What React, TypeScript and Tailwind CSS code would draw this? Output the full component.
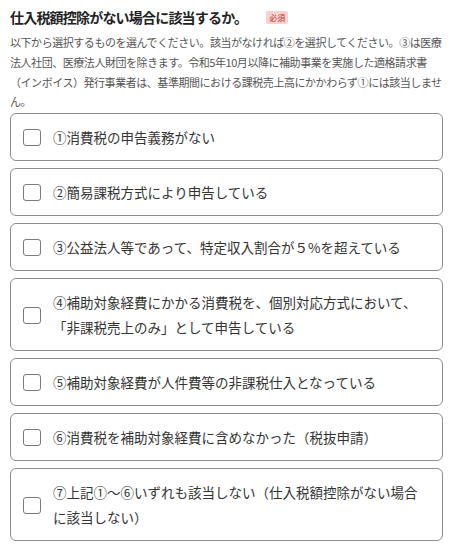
import { Fragment } from "react"

const options: string[][] = [
  ["①消費税の申告義務がない"],
  ["②簡易課税方式により申告している"],
  ["③公益法人等であって、特定収入割合が５%を超えている"],
  ["④補助対象経費にかかる消費税を、個別対応方式において、", "「非課税売上のみ」として申告している"],
  ["⑤補助対象経費が人件費等の非課税仕入となっている"],
  ["⑥消費税を補助対象経費に含めなかった（税抜申請）"],
  ["⑦上記①～⑥いずれも該当しない（仕入税額控除がない場合", "に該当しない）"],
]

const note = [
  "以下から選択するものを選んでください。該当がなければ②を選択してください。③は医療",
  "法人社団、医療法人財団を除きます。令和5年10月以降に補助事業を実施した適格請求書",
  "（インボイス）発行事業者は、基準期間における課税売上高にかかわらず①には該当しませ",
  "ん。",
]

export default function App() {
  return (
    <div
      className="w-[456px] min-h-[548px] bg-white px-[10px] pt-[7px]"
      style={{ fontFamily: '"Noto Sans CJK JP", "Noto Sans", sans-serif' }}
    >
      {/* Heading */}
      <div className="flex items-center">
        <h2 className="text-[14px] leading-[20px] font-bold tracking-[-0.8px] text-[#222]">
          仕入税額控除がない場合に該当するか。
        </h2>
        <span className="ml-[19px] rounded-[2px] bg-[#f6d2d2] px-[3px] text-[8px] leading-[13px] text-[#c0392b]">
          必須
        </span>
      </div>

      {/* Note */}
      <p className="mt-[6px] whitespace-nowrap text-[11px] leading-[19.8px] tracking-[-0.45px] text-[#555]">
        {note.map((line, i) => (
          <Fragment key={i}>
            {line}
            {i < note.length - 1 && <br />}
          </Fragment>
        ))}
      </p>

      {/* Options */}
      <div className="mt-[1px] flex flex-col gap-[7px]">
        {options.map((lines, i) => (
          <label
            key={i}
            className="flex w-[433px] items-center gap-[12px] rounded-[6px] border border-[#8c8c8c] pl-[12px] pr-[20px] pt-[11px] pb-[10px]"
          >
            <span className="h-[17px] w-[18px] shrink-0 rounded-[3px] border border-[#7a7a7a] bg-white" />
            <span className="whitespace-nowrap text-[13.5px] leading-[25px] text-[#333]">
              {lines.map((l, j) => (
                <Fragment key={j}>
                  {l}
                  {j < lines.length - 1 && <br />}
                </Fragment>
              ))}
            </span>
          </label>
        ))}
      </div>
    </div>
  )
}
